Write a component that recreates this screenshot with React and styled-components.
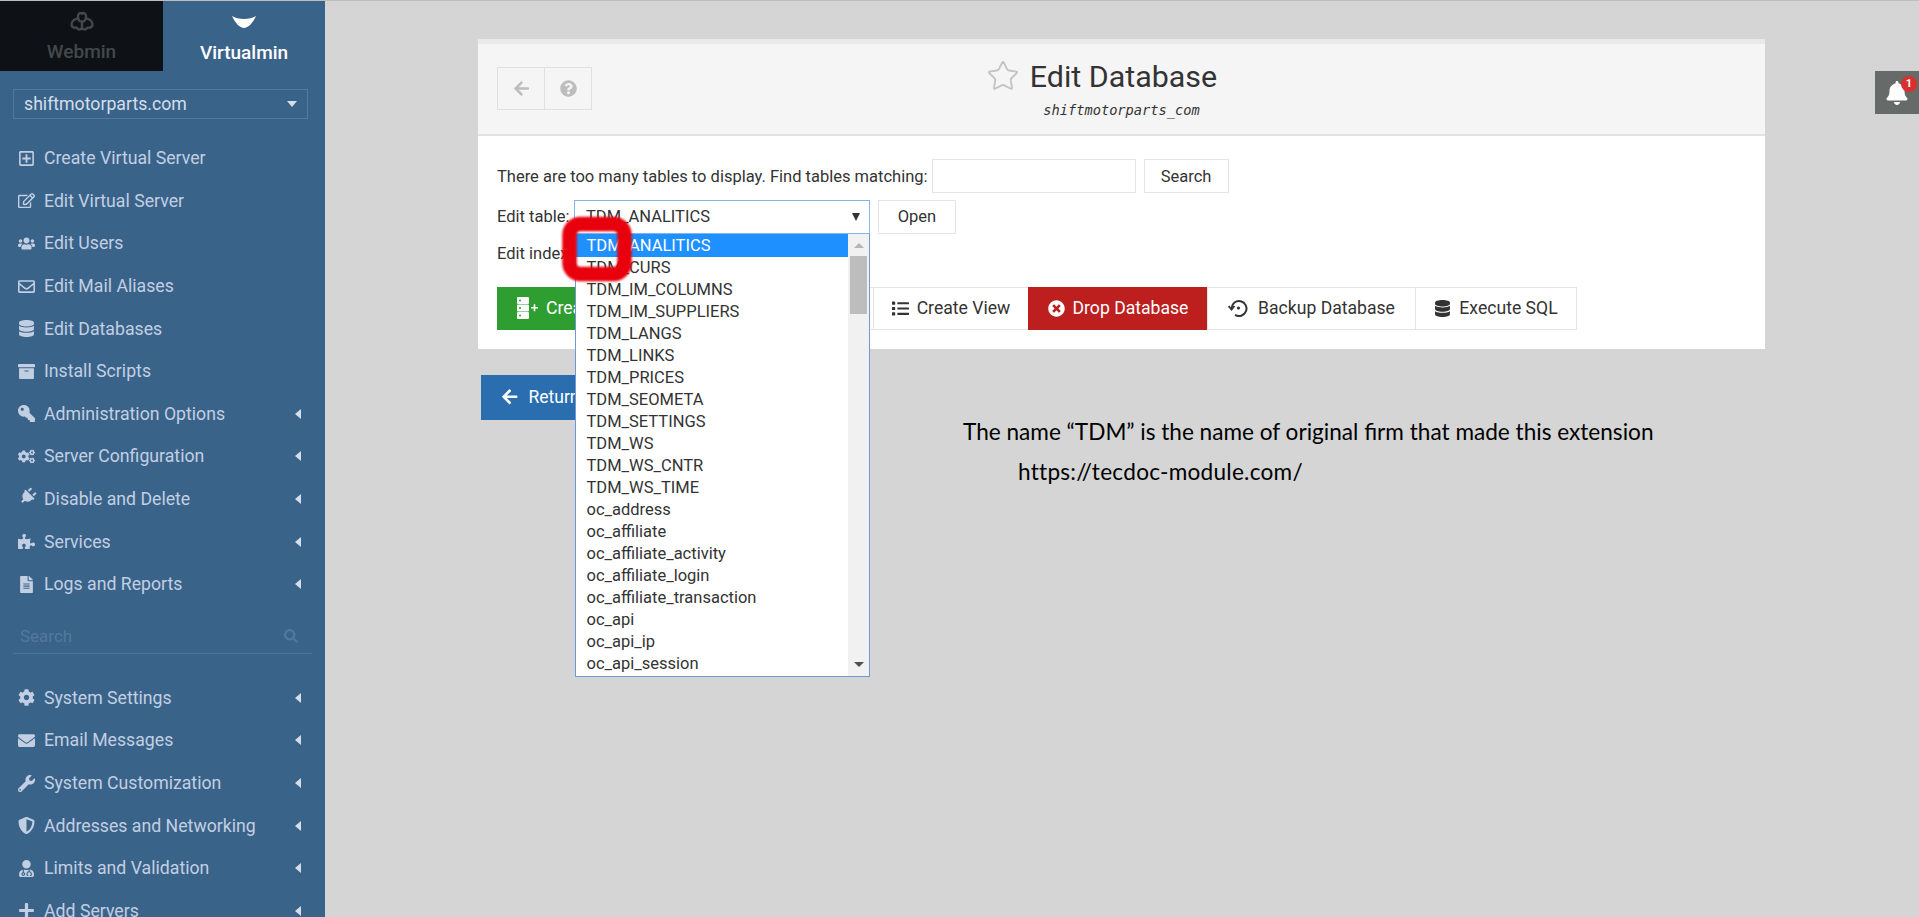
import React from 'react'
import styled, {createGlobalStyle} from 'styled-components'
import {
  FaRegPlusSquare, FaRegEdit, FaUsers, FaRegEnvelope, FaDatabase, FaArchive, FaKey, FaCogs,
  FaPlug, FaPuzzlePiece, FaFileAlt, FaCog, FaEnvelope, FaWrench, FaShieldAlt, FaUserMd, FaPlus,
  FaSearch, FaArrowLeft, FaQuestionCircle, FaList, FaTimesCircle, FaBell,
} from 'react-icons/fa'
import {Star} from 'lucide-react'

const GlobalStyle = createGlobalStyle`
  html, body {
    margin: 0;
    height: 100%;
    overflow: hidden;
    background: #d5d5d5;
    font-family: Roboto, "Liberation Sans", sans-serif;
  }
`

const firstMenu = [
  {label: 'Create Virtual Server', icon: FaRegPlusSquare},
  {label: 'Edit Virtual Server', icon: FaRegEdit},
  {label: 'Edit Users', icon: FaUsers},
  {label: 'Edit Mail Aliases', icon: FaRegEnvelope},
  {label: 'Edit Databases', icon: FaDatabase},
  {label: 'Install Scripts', icon: FaArchive},
  {label: 'Administration Options', icon: FaKey, more: true, turn: 'scaleX(-1) translateX(9px)'},
  {label: 'Server Configuration', icon: FaCogs, more: true},
  {label: 'Disable and Delete', icon: FaPlug, more: true, turn: 'rotate(45deg)'},
  {label: 'Services', icon: FaPuzzlePiece, more: true},
  {label: 'Logs and Reports', icon: FaFileAlt, more: true},
]

const secondMenu = [
  {label: 'System Settings', icon: FaCog, more: true},
  {label: 'Email Messages', icon: FaEnvelope, more: true},
  {label: 'System Customization', icon: FaWrench, more: true},
  {label: 'Addresses and Networking', icon: FaShieldAlt, more: true},
  {label: 'Limits and Validation', icon: FaUserMd, more: true},
  {label: 'Add Servers', icon: FaPlus, more: true},
]

const tables = [
  'TDM_ANALITICS', 'TDM_CURS', 'TDM_IM_COLUMNS', 'TDM_IM_SUPPLIERS', 'TDM_LANGS', 'TDM_LINKS',
  'TDM_PRICES', 'TDM_SEOMETA', 'TDM_SETTINGS', 'TDM_WS', 'TDM_WS_CNTR', 'TDM_WS_TIME',
  'oc_address', 'oc_affiliate', 'oc_affiliate_activity', 'oc_affiliate_login',
  'oc_affiliate_transaction', 'oc_api', 'oc_api_ip', 'oc_api_session',
]

const WebminLogo = () => (
  <svg width="24" height="22" viewBox="0 0 24 22" fill="none" stroke="currentColor" strokeWidth="2.4" strokeLinejoin="round">
    <path d="M12 10.5 C9 11 8 8 8 5.5 C8 2.5 10 1.2 12 2.8 C14 1.2 16 2.5 16 5.5 C16 8 15 11 12 10.5 Z" />
    <path d="M8.5 7.5 C5 7.5 1.6 10 1.5 13 C1.4 16 4 17.5 6.5 16.5 C8.5 19.5 11 19 12 16.5 C13 19 15.5 19.5 17.5 16.5 C20 17.5 22.6 16 22.5 13 C22.4 10 19 7.5 15.5 7.5" />
    <path d="M12 10.5 V16" />
  </svg>
)

const VirtualminLogo = () => (
  <svg width="26" height="14" viewBox="0 0 26 14" fill="#fff">
    <path d="M1 1 C7 5 19 5 25 1 C22 8 17 13 13 13 C9 13 4 8 1 1 Z" />
  </svg>
)

const ServerPlus = () => (
  <svg width="21" height="22" viewBox="0 0 21 22" fill="#fff">
    <path fillRule="evenodd" d="M1 0 H11 Q12 0 12 1 V6 Q12 7 11 7 H1 Q0 7 0 6 V1 Q0 0 1 0 Z M3 2.5 A1 1 0 1 0 3 4.5 A1 1 0 1 0 3 2.5 Z" />
    <path fillRule="evenodd" d="M1 7.5 H11 Q12 7.5 12 8.5 V13.5 Q12 14.5 11 14.5 H1 Q0 14.5 0 13.5 V8.5 Q0 7.5 1 7.5 Z M3 10 A1 1 0 1 0 3 12 A1 1 0 1 0 3 10 Z" />
    <path fillRule="evenodd" d="M1 15 H11 Q12 15 12 16 V21 Q12 22 11 22 H1 Q0 22 0 21 V16 Q0 15 1 15 Z M3 17.5 A1 1 0 1 0 3 19.5 A1 1 0 1 0 3 17.5 Z" />
    <path d="M14 10 H16.7 V7.3 H18.3 V10 H21 V11.6 H18.3 V14.3 H16.7 V11.6 H14 Z" />
  </svg>
)

const BackupIcon = () => (
  <svg width="20" height="20" viewBox="0 0 20 20" fill="none" stroke="currentColor" strokeWidth="2">
    <path d="M3.5 10 A7.5 7.5 0 1 1 7 16.9" />
    <path d="M0.5 8 L3.5 11.5 L6.5 8" strokeWidth="1.8" />
    <circle cx="10.5" cy="10" r="1.6" fill="currentColor" stroke="none" />
  </svg>
)

const MarkIcon = () => (
  <svg width="84" height="80" viewBox="0 0 84 80" fill="none">
    <rect x="14.5" y="15" width="55" height="50" rx="11" stroke="#e8000c" strokeWidth="14.5" />
  </svg>
)

const MenuGroup = ({items}) => (
  <Menu>
    {items.map(item => (
      <MenuRow key={item.label}>
        <MenuIcon $turn={item.turn}><item.icon /></MenuIcon>
        <span>{item.label}</span>
        {item.more && <MenuArrow />}
      </MenuRow>
    ))}
  </Menu>
)

const App = () => {
  return (
    <>
      <GlobalStyle />
      <Page>
        <Sidebar>
          <Tabs>
            <Tab>
              <WebminLogo />
              <span>Webmin</span>
            </Tab>
            <Tab $active>
              <VirtualminLogo />
              <span>Virtualmin</span>
            </Tab>
          </Tabs>
          <DomainSelect>
            <span>shiftmotorparts.com</span>
            <DomainCaret />
          </DomainSelect>
          <MenuGroup items={firstMenu} />
          <SideSearch>
            <span>Search</span>
            <FaSearch />
          </SideSearch>
          <MenuGroup items={secondMenu} />
        </Sidebar>

        <Main>
          <Panel>
            <PanelHeader>
              <HeaderTools>
                <ToolButton><FaArrowLeft /></ToolButton>
                <ToolButton><FaQuestionCircle /></ToolButton>
              </HeaderTools>
              <HeaderTitle>
                <Title>
                  <TitleStar><Star size={34} strokeWidth={1.3} /></TitleStar>
                  Edit Database
                </Title>
                <Subtitle>shiftmotorparts_com</Subtitle>
              </HeaderTitle>
            </PanelHeader>
            <PanelBody>
              <FormRow>
                <span>There are too many tables to display. Find tables matching:</span>
                <TextInput />
                <PlainButton $width={85}>Search</PlainButton>
              </FormRow>
              <TableRow>
                <TableLabel>Edit table:</TableLabel>
                <SelectWrap>
                  <SelectBox>
                    <span>TDM_ANALITICS</span>
                    <SelectCaret />
                  </SelectBox>
                  <Dropdown>
                    <OptionList>
                      {tables.map((name, i) => (
                        <Option key={name} $selected={i === 0}>{name}</Option>
                      ))}
                    </OptionList>
                    <Scrollbar>
                      <ScrollUp />
                      <ScrollThumb />
                      <ScrollDown />
                    </Scrollbar>
                  </Dropdown>
                  <RedMark><MarkIcon /></RedMark>
                </SelectWrap>
                <PlainButton $width={78}>Open</PlainButton>
              </TableRow>
              <IndexRow>Edit index:</IndexRow>
              <ActionBar>
                <ActionButton $bg="#2f9e30" $color="#fff" $width={200} $start>
                  <ServerPlus />
                  Create Table
                </ActionButton>
                <ActionButton $width={178}>Create Index</ActionButton>
                <ActionButton $width={156}>
                  <FaList />
                  Create View
                </ActionButton>
                <ActionButton $bg="#bd1e1e" $color="#fff" $width={180}>
                  <FaTimesCircle />
                  Drop Database
                </ActionButton>
                <ActionButton $width={209} $gap={10}>
                  <BackupIcon />
                  Backup Database
                </ActionButton>
                <ActionButton $width={162}>
                  <FaDatabase />
                  Execute SQL
                </ActionButton>
              </ActionBar>
            </PanelBody>
          </Panel>
          <ReturnButton>
            <FaArrowLeft />
            Return to database list
          </ReturnButton>
          <Note>The name “TDM” is the name of original firm that made this extension</Note>
          <NoteLink>https://tecdoc-module.com/</NoteLink>
          <Notifier>
            <FaBell />
            <NotifierBadge>1</NotifierBadge>
          </Notifier>
        </Main>
      </Page>
    </>
  )
}

export default App

const Page = styled.div`
  display: flex;
  height: 917px;
  box-sizing: border-box;
  border-top: 1px solid #bdbdbd;
  overflow: hidden;
  color: #333;
  font-size: 16.5px;
`

const Sidebar = styled.aside`
  width: 325px;
  flex: none;
  background: #3a638a;
  overflow: hidden;
`

const Tabs = styled.div`
  display: flex;
  height: 70px;
`

const Tab = styled.div`
  display: flex;
  flex-direction: column;
  align-items: center;
  width: ${p => (p.$active ? '162px' : '163px')};
  padding-top: ${p => (p.$active ? '14px' : '10px')};
  box-sizing: border-box;
  gap: ${p => (p.$active ? '12px' : '7px')};
  background: ${p => (p.$active ? 'transparent' : '#0e1216')};
  color: ${p => (p.$active ? '#fff' : '#43484c')};
  font-size: 19px;
  font-weight: 500;
`

const DomainSelect = styled.div`
  display: flex;
  align-items: center;
  justify-content: space-between;
  box-sizing: border-box;
  width: 295px;
  height: 30px;
  margin: 18px 0 18px 13px;
  padding: 0 10px;
  border: 1px solid #5279a0;
  color: #d5deea;
  font-size: 17.7px;
`

const DomainCaret = styled.i`
  border-left: 5px solid transparent;
  border-right: 5px solid transparent;
  border-top: 6px solid #d5deea;
`

const Menu = styled.nav`
  display: flex;
  flex-direction: column;
`

const MenuRow = styled.div`
  display: flex;
  align-items: center;
  height: 42.6px;
  padding-left: 18px;
  padding-right: 24px;
  color: #c2cfe2;
  font-size: 17.7px;
  span {
    flex: 1;
  }
`

const MenuIcon = styled.i`
  display: flex;
  width: 26px;
  flex: none;
  font-size: 17px;
  transform: ${p => p.$turn || 'none'};
`

const MenuArrow = styled.i`
  border-top: 5px solid transparent;
  border-bottom: 5px solid transparent;
  border-right: 6px solid #d5deea;
`

const SideSearch = styled.div`
  display: flex;
  align-items: center;
  justify-content: space-between;
  box-sizing: border-box;
  width: 299px;
  height: 34px;
  margin: 14px 0 23px 13px;
  padding: 0 14px 0 7px;
  border-bottom: 1px solid #4d759b;
  color: #54789c;
  font-size: 17px;
  svg {
    font-size: 14px;
  }
`

const Main = styled.main`
  position: relative;
  flex: 1;
  padding: 38px 154px 0 153px;
`

const Panel = styled.section`
  background: #fff;
  border-top: 5px solid #e9e9e9;
`

const PanelHeader = styled.header`
  display: grid;
  grid-template-columns: 1fr auto 1fr;
  align-items: start;
  box-sizing: border-box;
  height: 92px;
  padding: 23px 19px 0;
  background: #f5f5f5;
  border-bottom: 2px solid #e2e2e2;
`

const HeaderTools = styled.div`
  display: flex;
  width: fit-content;
  border: 1px solid #e0e0e0;
`

const ToolButton = styled.div`
  display: flex;
  align-items: center;
  justify-content: center;
  width: 46px;
  height: 41px;
  color: #bdbdbd;
  font-size: 17px;
  & + & {
    border-left: 1px solid #e0e0e0;
  }
`

const HeaderTitle = styled.div`
  display: flex;
  flex-direction: column;
  align-items: center;
`

const Title = styled.h1`
  position: relative;
  left: 2px;
  margin: -10px 0 0;
  color: #333;
  font-size: 30.4px;
  font-weight: 400;
  line-height: 40px;
`

const TitleStar = styled.span`
  position: absolute;
  left: -44px;
  top: 2px;
  color: #c4c4c4;
`

const Subtitle = styled.div`
  margin-top: 5px;
  color: #333;
  font-family: "DejaVu Sans Mono", "Liberation Mono", monospace;
  font-size: 13.7px;
  font-style: italic;
`

const PanelBody = styled.div`
  padding: 22.5px 19px 19px;
`

const FormRow = styled.div`
  display: flex;
  align-items: center;
  gap: 4px;
  height: 35px;
`

const TextInput = styled.div`
  box-sizing: border-box;
  width: 204px;
  height: 34px;
  background: #fff;
  border: 1px solid #e5e5e5;
  margin-right: 4px;
`

const PlainButton = styled.div`
  display: flex;
  align-items: center;
  justify-content: center;
  box-sizing: border-box;
  width: ${p => p.$width}px;
  height: 34px;
  border: 1px solid #e5e5e5;
`

const TableRow = styled(FormRow)`
  margin-top: 6px;
  height: 34px;
  gap: 0;
  ${PlainButton} {
    margin-left: 8px;
  }
`

const TableLabel = styled.span`
  width: 77px;
  flex: none;
`

const SelectWrap = styled.div`
  position: relative;
`

const SelectBox = styled.div`
  display: flex;
  align-items: center;
  justify-content: space-between;
  box-sizing: border-box;
  width: 296px;
  height: 34px;
  padding: 0 9px 0 11px;
  border: 1px solid #86b4ea;
  background: #fff;
`

const SelectCaret = styled.i`
  border-left: 4px solid transparent;
  border-right: 4px solid transparent;
  border-top: 8px solid #333;
`

const Dropdown = styled.div`
  position: absolute;
  top: 34px;
  left: 1px;
  z-index: 5;
  display: flex;
  box-sizing: border-box;
  width: 295px;
  height: 443px;
  background: #fff;
  border: 1px solid #6f99d6;
  border-top: 0;
`

const OptionList = styled.div`
  flex: 1;
  overflow: hidden;
`

const Option = styled.div`
  height: 22px;
  line-height: 22px;
  padding-left: 10.5px;
  background: ${p => (p.$selected ? '#1e90ff' : 'transparent')};
  color: ${p => (p.$selected ? '#fff' : '#333')};
  &:first-child {
    height: 23px;
    line-height: 23px;
  }
`

const Scrollbar = styled.div`
  position: relative;
  width: 21px;
  flex: none;
  background: #f1f1f1;
`

const ScrollThumb = styled.div`
  position: absolute;
  top: 22px;
  left: 2px;
  width: 17px;
  height: 58px;
  background: #bdbdbd;
`

const ScrollUp = styled.i`
  position: absolute;
  top: 9px;
  left: 6px;
  border-left: 5px solid transparent;
  border-right: 5px solid transparent;
  border-bottom: 5px solid #b5b5b5;
`

const ScrollDown = styled.i`
  position: absolute;
  bottom: 9px;
  left: 6px;
  border-left: 5px solid transparent;
  border-right: 5px solid transparent;
  border-top: 5px solid #505050;
`

const RedMark = styled.div`
  position: absolute;
  top: 9px;
  left: -19px;
  z-index: 6;
  filter: blur(1.3px);
  svg {
    display: block;
  }
`

const IndexRow = styled.div`
  height: 34px;
  line-height: 34px;
  margin-top: 3px;
`

const ActionBar = styled.div`
  display: flex;
  margin-top: 16px;
`

const ActionButton = styled.div`
  display: flex;
  align-items: center;
  justify-content: ${p => (p.$start ? 'flex-start' : 'center')};
  gap: ${p => p.$gap || 8}px;
  box-sizing: border-box;
  width: ${p => p.$width}px;
  height: 43px;
  padding-left: ${p => (p.$start ? '19px' : '0')};
  background: ${p => p.$bg || '#fff'};
  color: ${p => p.$color || '#333'};
  border: 1px solid ${p => p.$bg || '#e5e5e5'};
  font-size: 17.6px;
  white-space: nowrap;
  & + & {
    margin-left: -1px;
  }
  svg {
    font-size: 17px;
  }
`

const ReturnButton = styled.div`
  display: flex;
  align-items: center;
  gap: 10px;
  width: fit-content;
  height: 45px;
  margin: 26px 0 0 3px;
  padding: 0 20px;
  background: #2a6eb0;
  color: #fff;
  font-size: 17.5px;
`

const Note = styled.div`
  position: absolute;
  left: 638px;
  top: 417px;
  color: #000;
  font-family: Lato, "Open Sans", sans-serif;
  font-size: 22.6px;
  white-space: nowrap;
`

const NoteLink = styled(Note)`
  left: 693px;
  top: 457px;
  letter-spacing: 0.25px;
`

const Notifier = styled.div`
  position: absolute;
  right: 0;
  top: 70px;
  display: flex;
  align-items: center;
  justify-content: center;
  width: 44px;
  height: 43px;
  background: #666a68;
  color: #fff;
  font-size: 24px;
`

const NotifierBadge = styled.span`
  position: absolute;
  top: 5px;
  right: 2px;
  width: 16px;
  height: 16px;
  border-radius: 50%;
  background: #d9302e;
  color: #fff;
  font-size: 11px;
  font-weight: 700;
  line-height: 16px;
  text-align: center;
`
